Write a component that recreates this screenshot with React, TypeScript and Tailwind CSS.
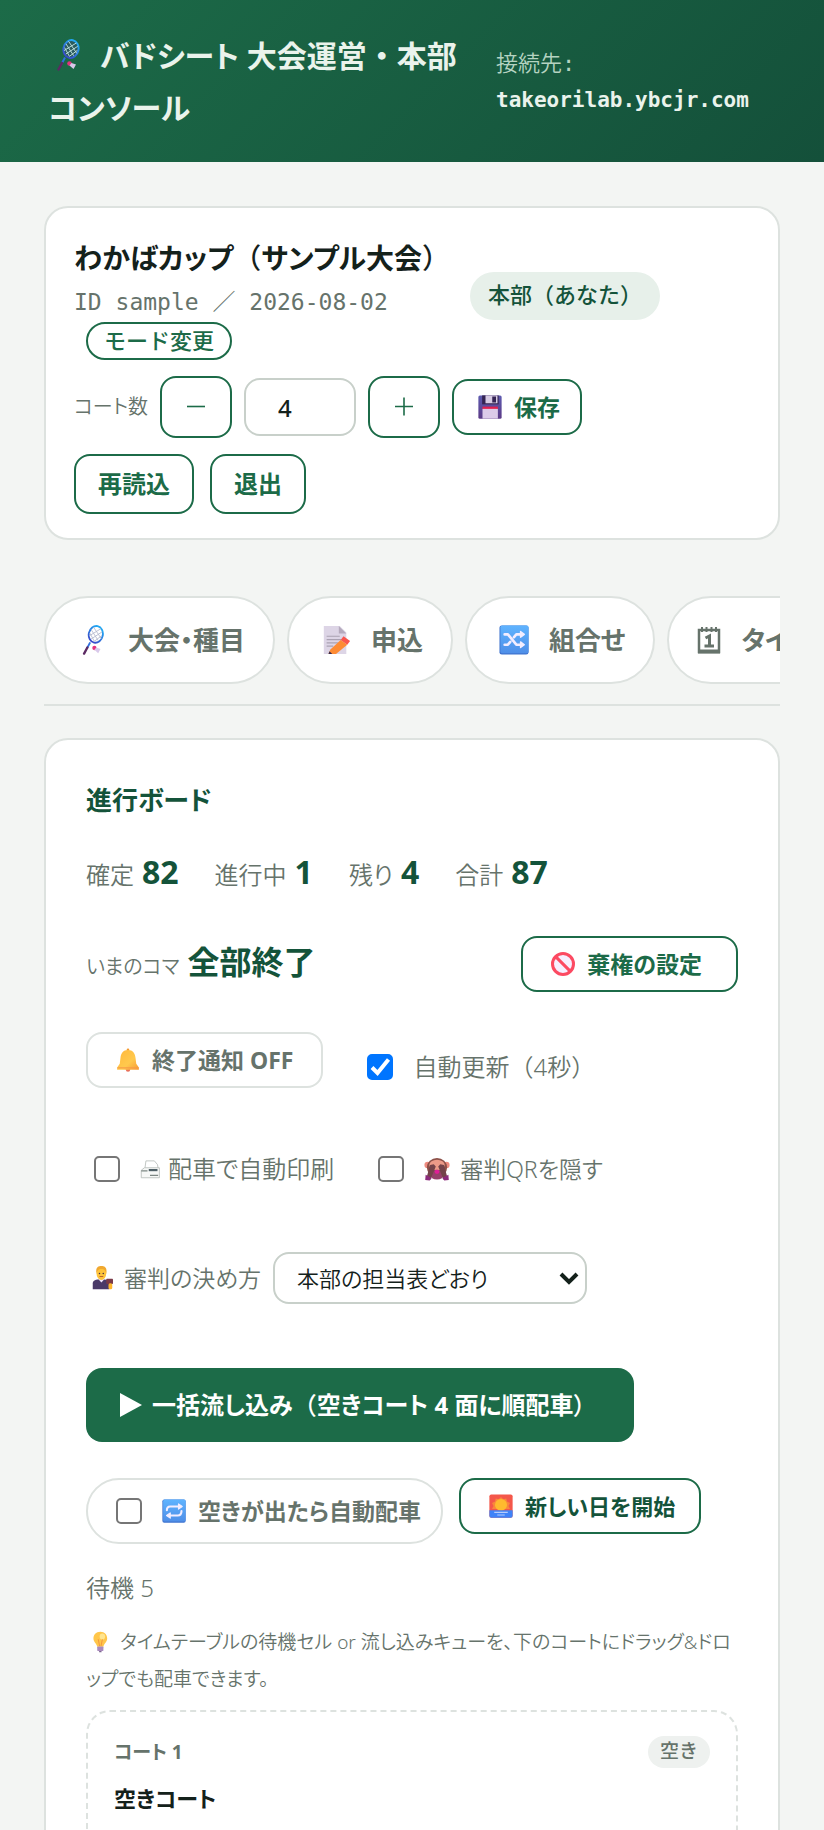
import { useState } from "react";
import type { ReactNode } from "react";

function Icon({ children, className = "h-6 w-6" }: { children: ReactNode; className?: string }) {
  return (
    <svg viewBox="0 0 32 32" className={`shrink-0 ${className}`} aria-hidden="true">
      {children}
    </svg>
  );
}

function RacketIcon({ className, dark }: { className?: string; dark?: boolean }) {
  const id = dark ? "racket-dark" : "racket";
  return (
    <Icon className={className}>
      <defs>
        <linearGradient id={id} x1="0" y1="1" x2="0.4" y2="0">
          <stop offset="0" stopColor="#3b3bc4" />
          <stop offset="1" stopColor="#22a6f2" />
        </linearGradient>
      </defs>
      <path d="M13 18.5 L9.5 25" stroke="#2f6fe0" strokeWidth="2" />
      <path d="M10 24 L6.5 30.5" stroke="#5c2a63" strokeWidth="2.500" strokeLinecap="round" />
      <g transform="rotate(12 19 10)">
        <ellipse cx="19" cy="10" rx="7.5" ry="9" fill={dark ? "#2a5a5c" : "#fff"} stroke={`url(#${id})`} strokeWidth="2" />
        <path
          d="M13 6 L23 16 M15 3 L25.500 13 M12.500 10 L19 17.500 M25 6 L15 16 M23 3 L12.500 13 M25.500 10 L19 17.500"
          stroke={dark ? "#b9dcdc" : "#b8bcd0"}
          strokeWidth="0.9"
        />
      </g>
      <circle cx="17.500" cy="24.500" r="2.300" fill="#e3327f" />
      <path d="M17.500 26.500 L19.500 24 L24 25.500 L21.500 30 Z" fill="#d9c9ea" />
    </Icon>
  );
}

function FloppyIcon() {
  return (
    <Icon>
      <defs>
        <linearGradient id="floppy" x1="0" y1="0" x2="0" y2="1">
          <stop offset="0" stopColor="#5d5bb0" />
          <stop offset="1" stopColor="#5b3a86" />
        </linearGradient>
      </defs>
      <rect x="0.500" y="0.500" width="31" height="31" rx="2" fill="url(#floppy)" />
      <rect x="5.500" y="0.500" width="22" height="12" fill="#352453" />
      <rect x="10" y="0.500" width="16" height="10.500" fill="#d7cbe4" />
      <rect x="19" y="2" width="5" height="8" fill="#352453" />
      <rect x="6" y="15.500" width="20.500" height="4" fill="#e2204f" />
      <rect x="6" y="18.500" width="20.500" height="13" fill="#dccbe9" />
    </Icon>
  );
}

function MemoIcon() {
  return (
    <Icon className="h-[30px] w-[30px]">
      <path d="M3 1 H20 L27 8 V31 H3 Z" fill="#ddd5e6" />
      <path d="M19 1 L27 9 H19 Z" fill="#b5aabd" />
      <path d="M6 12 H20 M6 15.500 H22 M6 19 H18 M6 22.500 H13" stroke="#aaa2b3" strokeWidth="1.300" />
      <path d="M24 12 L31 17 L28 21 L21 16 Z" fill="#f9564e" />
      <path d="M21 16 L28 21 L16 31 L8 31 L10 26 Z" fill="#fd8b34" />
      <path d="M8 31 L9 28 L12 31 Z" fill="#3c2d4b" />
    </Icon>
  );
}

function BlueTile({ id, className, children }: { id: string; className?: string; children: ReactNode }) {
  return (
    <Icon className={className}>
      <defs>
        <linearGradient id={id} x1="0" y1="0" x2="0" y2="1">
          <stop offset="0" stopColor="#5fb4ff" />
          <stop offset="1" stopColor="#4f8fe8" />
        </linearGradient>
      </defs>
      <rect x="0.500" y="0.500" width="31" height="31" rx="2.500" fill="#3f74cf" />
      <rect x="1.500" y="0.500" width="30" height="29.500" rx="2" fill={`url(#${id})`} />
      <g fill="none" stroke="#f3edff" strokeWidth="2.800" strokeLinecap="round" strokeLinejoin="round">
        {children}
      </g>
    </Icon>
  );
}

function ShuffleIcon() {
  return (
    <BlueTile id="tile-shuffle" className="h-[30px] w-[30px]">
      <path d="M6 10 H9.500 L18.500 21 H24 M6 21 H9.500 L12 18 M16 13 L18.500 10 H24" />
      <path d="M23 7 L27 10 L23 13 Z M23 18 L27 21 L23 24 Z" strokeWidth="1.500" fill="#f3edff" />
    </BlueTile>
  );
}

function RepeatIcon() {
  return (
    <BlueTile id="tile-repeat">
      <path d="M6.500 15 C6.500 11 8 10 11 10 H22 M26 16 C26 20.500 24 22 21 22 H10" />
      <path d="M22 6.500 L27 10 L22 13.500 Z M11 18.500 L6 22 L11 25.500 Z" strokeWidth="1.500" fill="#f3edff" />
    </BlueTile>
  );
}

function CalendarIcon() {
  return (
    <svg viewBox="0 0 24 28" className="h-7 w-6 shrink-0" aria-hidden="true">
      <path d="M2 4 H22 V26 H2 Z" fill="none" stroke="#66736b" strokeWidth="2.500" />
      <path d="M1 25.500 H23" stroke="#66736b" strokeWidth="4" />
      <path d="M5 1 V6 M9.500 1 V6 M14.500 1 V6 M19 1 V6" stroke="#66736b" strokeWidth="2" />
      <path d="M8.500 12 L12.500 10 V20 M7.500 20 H17" fill="none" stroke="#66736b" strokeWidth="3" />
    </svg>
  );
}

function BanIcon() {
  return (
    <Icon>
      <circle cx="16" cy="16" r="14" fill="#f6efff" stroke="#fc4a62" strokeWidth="4" />
      <path d="M6.500 6.500 L25.500 25.500" stroke="#fc4a62" strokeWidth="4" />
    </Icon>
  );
}

function BellIcon() {
  return (
    <Icon>
      <defs>
        <linearGradient id="bell" x1="0" y1="0" x2="1" y2="1">
          <stop offset="0" stopColor="#ffb83c" />
          <stop offset="0.600" stopColor="#ffc94d" />
          <stop offset="1" stopColor="#f79a35" />
        </linearGradient>
      </defs>
      <circle cx="16" cy="28.500" r="3" fill="#e8705a" />
      <circle cx="16" cy="2.500" r="1.800" fill="#f59a30" />
      <path d="M16 2.500 C9.500 2.500 6.500 7 6 13 L5 21 L1.500 26 V29 H30.500 V26 L27 21 L26 13 C25.500 7 22.500 2.500 16 2.500 Z" fill="url(#bell)" />
      <path d="M2 26.500 H30" stroke="#f79a48" strokeWidth="1.500" />
    </Icon>
  );
}

function PrinterIcon() {
  return (
    <Icon className="h-5 w-5">
      <g fill="none" stroke="#b4bab6" strokeWidth="1.300">
        <path d="M8 14 L9.500 3 H23 L28 9 L29 15" />
        <path d="M2 18 V30 H31 V14 H7 L2 18 Z" fill="#f7f8f7" />
      </g>
      <rect x="14" y="16" width="14" height="3.500" fill="#4e5f66" />
      <path d="M2 19 H12 M16 26 H29" stroke="#7d8784" strokeWidth="2" />
    </Icon>
  );
}

function MonkeyIcon() {
  return (
    <Icon className="h-[26px] w-[26px]">
      <circle cx="4.500" cy="11" r="4" fill="#ef8c80" />
      <circle cx="27.500" cy="11" r="4" fill="#ef8c80" />
      <ellipse cx="16" cy="14" rx="12.500" ry="11.500" fill="#8c5048" />
      <ellipse cx="16" cy="11" rx="9.500" ry="6.500" fill="#ec9a88" />
      <ellipse cx="16" cy="23" rx="8.500" ry="6" fill="#96406a" />
      <ellipse cx="16" cy="19.500" rx="3" ry="2.500" fill="#e01e97" />
      <path d="M7.500 11 L12 10 L14.500 13 L8 29 L2.500 29 Z M24.500 11 L20 10 L17.500 13 L24 29 L29.500 29 Z" fill="#74434a" />
      <path d="M2 23 L9.500 27 L7 30 L1.500 29.500 Z M30 23 L22.500 27 L25 30 L30.500 29.500 Z" fill="#8c2b7c" />
    </Icon>
  );
}

function JudgeIcon() {
  return (
    <Icon>
      <path d="M1 31 V23 C1 19 5 17.500 12 17.500 C19 17.500 23 19 23 23 V31 Z" fill="#4a3a68" />
      <path d="M8 17 H17 L12.500 22 Z" fill="#f2e8ff" />
      <ellipse cx="12.500" cy="9.500" rx="6.500" ry="9" fill="#ffc43b" />
      <path d="M6 10 C4.500 2 8 0 12.500 0 C17 0 20.500 2 19 10 C18 5 15 4 12.500 4 C10 4 7 5 6 10 Z" fill="#f0a830" />
      <circle cx="10" cy="10" r="1" fill="#3c2d4b" />
      <circle cx="15" cy="10" r="1" fill="#3c2d4b" />
      <path d="M10 14 H15" stroke="#b4572d" strokeWidth="1.200" />
      <rect x="19" y="17" width="9" height="7" rx="1" fill="#7a3a48" />
      <rect x="22" y="23" width="5" height="8" rx="2" fill="#ffb72e" />
    </Icon>
  );
}

function SunriseIcon() {
  return (
    <Icon>
      <rect x="0.500" y="0.500" width="31" height="31" rx="2.500" fill="#f4574a" />
      <path
        d="M16 4 L19 7 L23 6 L24 10 L28 12 L26 16 L28 20 H4 L6 16 L4 12 L8 10 L9 6 L13 7 Z"
        fill="#f9873b"
      />
      <circle cx="16" cy="14.500" r="8" fill="#ffba2e" />
      <path d="M0.500 21.500 H31.500 V29 A2.500 2.500 0 0 1 29 31.500 H3 A2.500 2.500 0 0 1 0.500 29 Z" fill="#3f83f8" />
      <path d="M7 24.500 H25 M11 28 H21" stroke="#b8cdfb" strokeWidth="1.500" />
    </Icon>
  );
}

function BulbIcon() {
  return (
    <Icon className="h-[22px] w-[22px]">
      <path d="M15 1 C8.500 1 5 5.500 5 11 C5 16 9.500 18 10.500 23 H19.500 C20.500 18 25 16 25 11 C25 5.500 21.500 1 15 1 Z" fill="#ffc64a" />
      <ellipse cx="18" cy="8" rx="4" ry="4.500" fill="#ffe58f" />
      <path d="M12 12 L14 22 M18 12 L16 22" stroke="#f08c3a" strokeWidth="1.200" />
      <rect x="10.500" y="22.500" width="9" height="6.500" rx="1" fill="#a98bbd" />
      <rect x="13" y="29" width="4" height="2" rx="1" fill="#7e6691" />
    </Icon>
  );
}

function CheckBox({ id, checked, onChange }: { id: string; checked: boolean; onChange: () => void }) {
  return (
    <span className="relative mr-5 h-[26px] w-[26px] shrink-0">
      <input
        id={id}
        type="checkbox"
        checked={checked}
        onChange={onChange}
        className="peer block h-full w-full appearance-none rounded-[5px] border-2 border-[#767676] bg-white checked:border-[#0075ff] checked:bg-[#0075ff]"
      />
      <svg viewBox="0 0 26 26" className="pointer-events-none absolute inset-0 hidden peer-checked:block" aria-hidden="true">
        <path d="M5 13.500 L10.500 19 L21.500 5.500" fill="none" stroke="#fff" strokeWidth="4" />
      </svg>
    </span>
  );
}

const tabs = [
  { label: "大会・種目", icon: <RacketIcon className="h-[30px] w-[30px]" />, wide: true },
  { label: "申込", icon: <MemoIcon />, wide: true },
  { label: "組合せ", icon: <ShuffleIcon />, wide: true },
  { label: "タイムテーブル", icon: <CalendarIcon />, wide: false },
];

const stats = [
  { label: "確定", value: 82 },
  { label: "進行中", value: 1 },
  { label: "残り", value: 4 },
  { label: "合計", value: 87 },
];

const outline = "rounded-2xl border-2 border-[#1c6b48] bg-white font-bold text-[#1c6b48]";

export default function App() {
  const [courts, setCourts] = useState(4);
  const [autoUpdate, setAutoUpdate] = useState(true);
  const [autoPrint, setAutoPrint] = useState(false);
  const [hideQr, setHideQr] = useState(false);
  const [autoAssign, setAutoAssign] = useState(false);

  return (
    <div
      lang="ja"
      className="min-h-screen bg-[#f3f5f3] font-['Noto_Sans','Noto_Sans_CJK_JP',sans-serif] text-[23px] font-[350] text-[#66736b] [font-feature-settings:'palt']"
    >
      <header className="flex items-center justify-between gap-8 bg-[linear-gradient(135deg,#1c6b48_0%,#14503a_100%)] px-12 pt-[30px] pb-7 text-[#eaf3ec]">
        <h1 className="flex-1 text-[30px] leading-[52px] font-bold">
          <RacketIcon dark className="mr-4 ml-1 inline-block h-8 w-8 align-[-4px]" />
          バドシート 大会運営<span className="[font-feature-settings:normal]">・</span>本部
          <span className="inline-block">コンソール</span>
        </h1>
        <p className="w-[280px] font-['DejaVu_Sans_Mono','Noto_Sans_CJK_JP',monospace] text-[22px] leading-9 text-[#b5d3c1]">
          接続先:
          <br />
          <b className="text-[21px] font-bold text-[#eaf3ec]">takeorilab.ybcjr.com</b>
        </p>
      </header>

      <main className="px-11 pt-11">
        <section className="rounded-3xl border-2 border-[#dde2df] bg-white px-7 pt-[26px] pb-6">
          <div className="flex items-end gap-5">
            <div>
              <h2 className="text-[28px] leading-[48px] font-bold text-[#14211b]">
                わかばカップ<span className="font-medium [font-feature-settings:normal]">（</span>サンプル大会
                <span className="font-medium [font-feature-settings:normal]">）</span>
              </h2>
              <p className="font-['DejaVu_Sans_Mono','Noto_Sans_CJK_JP',monospace] leading-10 [font-feature-settings:normal]">
                ID sample ／ 2026-08-02
              </p>
            </div>
            <span className="mb-0.5 flex h-12 items-center rounded-full bg-[#e7f0ea] px-[18px] pb-1 text-[22px] font-medium text-[#14533a] [font-feature-settings:normal]">
              本部（あなた）
            </span>
          </div>
          <button className="ml-3 flex h-[38px] items-center rounded-full border-2 border-[#1c6b48] px-4 pb-0.5 text-[22px] font-medium text-[#1c6b48] [font-feature-settings:normal]">
            モード変更
          </button>
          <div className="mt-4 flex flex-wrap items-center gap-3">
            <label htmlFor="courts" className="text-xl">
              コート数
            </label>
            <button onClick={() => setCourts(Math.max(1, courts - 1))} className={`h-[62px] w-[72px] ${outline}`} aria-label="減らす">
              <svg viewBox="0 0 20 20" className="mx-auto h-5 w-5" aria-hidden="true">
                <path d="M1 9.500 H19" stroke="currentColor" strokeWidth="1.600" />
              </svg>
            </button>
            <input
              id="courts"
              type="number"
              value={courts}
              onChange={(e) => setCourts(Number(e.target.value))}
              className="h-[58px] w-28 rounded-2xl border-2 border-[#c8d0ca] bg-white pl-8 text-2xl font-medium text-[#14211b]"
            />
            <button onClick={() => setCourts(courts + 1)} className={`h-[62px] w-[72px] ${outline}`} aria-label="増やす">
              <svg viewBox="0 0 20 20" className="mx-auto h-5 w-5" aria-hidden="true">
                <path d="M1 9.500 H19 M10 0.500 V18.500" stroke="currentColor" strokeWidth="1.600" />
              </svg>
            </button>
            <button className={`flex h-14 items-center gap-3 pr-5 pl-6 ${outline}`}>
              <FloppyIcon />
              保存
            </button>
          </div>
          <div className="mt-4 flex gap-4 text-2xl">
            <button className={`h-[60px] px-[22px] ${outline}`}>再読込</button>
            <button className={`h-[60px] px-[22px] ${outline}`}>退出</button>
          </div>
        </section>

        <nav className="mt-14 flex gap-3 overflow-x-auto border-b-2 border-[#dde2df] pb-5 [scrollbar-width:none]">
          {tabs.map((tab) => (
            <a
              key={tab.label}
              href="#"
              className="flex h-[88px] shrink-0 items-center gap-5 rounded-full border-2 border-[#dde2df] bg-white px-7 text-[26px] font-bold whitespace-nowrap"
            >
              <span className={tab.wide ? "flex w-[34px] justify-end" : "flex w-6"}>{tab.icon}</span>
              {tab.label}
            </a>
          ))}
        </nav>

        <section className="mt-8 rounded-3xl border-2 border-[#dde2df] bg-white px-10 pt-[38px] pb-10">
          <h2 className="text-[26px] leading-[44px] font-bold text-[#14533a]">進行ボード</h2>

          <dl className="mt-7 flex flex-wrap gap-9 text-2xl">
            {stats.map((s) => (
              <div key={s.label} className="flex items-baseline gap-2 leading-[43px]">
                <dt>{s.label}</dt>
                <dd className="text-[32px] font-bold text-[#14533a]">{s.value}</dd>
              </div>
            ))}
          </dl>

          <div className="mt-10 flex items-center justify-between">
            <p className="flex items-baseline gap-2 text-xl leading-10">
              いまのコマ
              <b className="text-[32px] font-bold text-[#14533a]">全部終了</b>
            </p>
            <button className={`flex h-14 items-center gap-3 pr-[34px] pl-7 ${outline}`}>
              <BanIcon />
              棄権の設定
            </button>
          </div>

          <div className="mt-10 flex flex-wrap items-start gap-x-9 gap-y-8">
            <button className="flex h-14 items-center gap-3 rounded-2xl border-2 border-[#dde2df] px-7 font-bold">
              <BellIcon />
              終了通知 OFF
            </button>
            <label htmlFor="auto-update" className="flex h-[70px] items-center pl-2 text-2xl">
              <CheckBox id="auto-update" checked={autoUpdate} onChange={() => setAutoUpdate(!autoUpdate)} />
              <span className="[font-feature-settings:normal]">自動更新（4秒）</span>
            </label>
          </div>
          <div className="mt-8 flex flex-wrap gap-x-9">
            <label htmlFor="auto-print" className="flex h-[70px] items-center pl-2 text-2xl">
              <CheckBox id="auto-print" checked={autoPrint} onChange={() => setAutoPrint(!autoPrint)} />
              <PrinterIcon />
              <span className="ml-2">配車で自動印刷</span>
            </label>
            <label htmlFor="hide-qr" className="flex h-[70px] items-center pl-2">
              <CheckBox id="hide-qr" checked={hideQr} onChange={() => setHideQr(!hideQr)} />
              <MonkeyIcon />
              <span className="ml-2.5">審判QRを隠す</span>
            </label>
          </div>

          <div className="mt-12 flex items-center gap-3">
            <label htmlFor="judge" className="flex items-center gap-2 pl-1.5">
              <JudgeIcon />
              審判の決め方
            </label>
            <span className="relative">
              <select
                id="judge"
                className="block h-[52px] w-[314px] appearance-none rounded-2xl border-2 border-[#c8d0ca] bg-white pl-[22px] text-[22px] text-[#14211b]"
              >
                <option>本部の担当表どおり</option>
              </select>
              <svg viewBox="0 0 20 14" className="pointer-events-none absolute top-5 right-2 h-3.5 w-5" aria-hidden="true">
                <path d="M2 2 L10 10 L18 2" fill="none" stroke="#14211b" strokeWidth="4" />
              </svg>
            </span>
          </div>

          <button className="mt-16 flex h-[74px] items-center gap-2.5 rounded-2xl bg-[#1c6b48] pr-12 pl-[34px] text-2xl font-bold text-white">
            <svg viewBox="0 0 22 24" className="h-6 w-[22px]" aria-hidden="true">
              <path d="M0 0 L22 12 L0 24 Z" fill="currentColor" />
            </svg>
            <span>
              一括流し込み<span className="font-medium [font-feature-settings:normal]">（</span>空きコート 4 面に順配車
              <span className="font-medium">）</span>
            </span>
          </button>

          <div className="mt-9 flex flex-wrap items-start gap-4">
            <label
              htmlFor="auto-assign"
              className="flex h-[66px] items-center rounded-full border-2 border-[#dde2df] pr-5 pl-7 font-bold"
            >
              <CheckBox id="auto-assign" checked={autoAssign} onChange={() => setAutoAssign(!autoAssign)} />
              <RepeatIcon />
              <span className="ml-3">空きが出たら自動配車</span>
            </label>
            <button className="flex h-14 items-center gap-3 rounded-2xl border-2 border-[#1c6b48] pr-6 pl-7 text-[22px] font-bold text-[#14533a]">
              <SunriseIcon />
              新しい日を開始
            </button>
          </div>

          <p className="mt-6 text-2xl leading-10">待機 5</p>
          <p className="mt-4 text-[19px] leading-[37px]">
            <span className="mr-2 ml-1 inline-block align-[-4px]">
              <BulbIcon />
            </span>
            タイムテーブルの待機セル or 流し込みキューを、下のコートにドラッグ&amp;ドロップでも配車できます。
          </p>

          <article className="mt-3 rounded-3xl border-2 border-dashed border-[#dde2df] px-[26px] pt-6 pb-24">
            <div className="flex items-center justify-between">
              <h3 className="text-[19px] leading-8 font-bold">コート 1</h3>
              <span className="flex h-8 items-center rounded-full bg-[#eef1ef] px-3 pb-0.5 text-[19px] font-medium [font-feature-settings:normal]">
                空き
              </span>
            </div>
            <p className="mt-3 text-[22px] leading-9 font-bold text-[#14211b]">空きコート</p>
          </article>
        </section>
      </main>
    </div>
  );
}
